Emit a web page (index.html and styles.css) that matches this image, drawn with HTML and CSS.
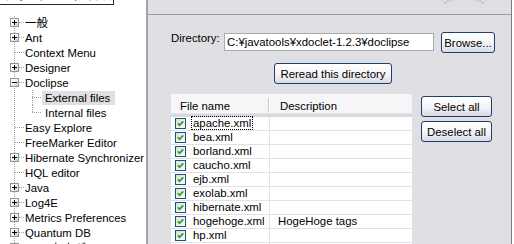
FILE: index.html
```html
<!DOCTYPE html>
<html lang="ja">
<head>
  <meta charset="UTF-8">
  <title>Preferences - Doclipse External files</title>
  <link rel="stylesheet" href="styles.css">
</head>
<body>
  <div class="window">
    <!-- preference tree -->
    <aside class="nav">
      <div class="filter">フィルター・テキストを入力</div>
      <ul class="tree">
        <li class="node"><svg class="tg" width="9" height="9"><use href="#plus"/></svg><span class="dash"></span><span class="label">一般</span></li>
        <li class="node"><svg class="tg" width="9" height="9"><use href="#plus"/></svg><span class="dash"></span><span class="label">Ant</span></li>
        <li class="node leaf"><span class="dash"></span><span class="label">Context Menu</span></li>
        <li class="node"><svg class="tg" width="9" height="9"><use href="#plus"/></svg><span class="dash"></span><span class="label">Designer</span></li>
        <li class="node"><svg class="tg" width="9" height="9"><use href="#minus"/></svg><span class="dash"></span><span class="label">Doclipse</span></li>
        <li class="node sub"><span class="elbow tee"></span><span class="label sel">External files</span></li>
        <li class="node sub"><span class="elbow"></span><span class="label">Internal files</span></li>
        <li class="node leaf"><span class="dash"></span><span class="label">Easy Explore</span></li>
        <li class="node leaf"><span class="dash"></span><span class="label">FreeMarker Editor</span></li>
        <li class="node"><svg class="tg" width="9" height="9"><use href="#plus"/></svg><span class="dash"></span><span class="label">Hibernate Synchronizer</span></li>
        <li class="node leaf"><span class="dash"></span><span class="label">HQL editor</span></li>
        <li class="node"><svg class="tg" width="9" height="9"><use href="#plus"/></svg><span class="dash"></span><span class="label">Java</span></li>
        <li class="node"><svg class="tg" width="9" height="9"><use href="#plus"/></svg><span class="dash"></span><span class="label">Log4E</span></li>
        <li class="node"><svg class="tg" width="9" height="9"><use href="#plus"/></svg><span class="dash"></span><span class="label">Metrics Preferences</span></li>
        <li class="node"><svg class="tg" width="9" height="9"><use href="#plus"/></svg><span class="dash"></span><span class="label">Quantum DB</span></li>
        <li class="node"><svg class="tg" width="9" height="9"><use href="#plus"/></svg><span class="dash"></span><span class="label">Web および XML</span></li>
      </ul>
    </aside>

    <!-- preference page -->
    <main class="page">
      <div class="page-head">
        <svg class="nav-arrow" width="14" height="14" viewBox="0 0 14 14"><path d="M1 7 L7 1 L7 4 L13 4 L13 10 L7 10 L7 13 Z"/></svg>
        <svg class="nav-arrow" width="14" height="14" viewBox="0 0 14 14"><path d="M13 7 L7 1 L7 4 L1 4 L1 10 L7 10 L7 13 Z"/></svg>
      </div>

      <div class="page-body">
        <div class="dir-row">
          <label for="dir">Directory:</label>
          <input type="text" id="dir" value="C:¥javatools¥xdoclet-1.2.3¥doclipse">
          <button class="btn browse">Browse...</button>
        </div>

        <div class="reread-row">
          <button class="btn reread">Reread this directory</button>
        </div>

        <div class="files">
          <div class="list">
            <table id="fileTable">
              <thead>
                <tr>
                  <th class="name">File name</th>
                  <th class="desc">Description</th>
                </tr>
              </thead>
              <tbody>
                <!-- rows are inserted by the script below -->
              </tbody>
            </table>
          </div>
          <div class="side">
            <button class="btn">Select all</button>
            <button class="btn">Deselect all</button>
          </div>
        </div>
      </div>
    </main>
  </div>

  <svg width="0" height="0" style="position:absolute">
    <defs>
      <linearGradient id="tgfill" x1="0" y1="0" x2="1" y2="1">
        <stop offset="0.35" stop-color="#ffffff"/>
        <stop offset="1" stop-color="#c4c4bc"/>
      </linearGradient>
      <linearGradient id="cbfill" x1="0" y1="0" x2="1" y2="1">
        <stop offset="0" stop-color="#dcdcd6"/>
        <stop offset="1" stop-color="#ffffff"/>
      </linearGradient>
      <g id="minus" shape-rendering="crispEdges">
        <rect x="0.5" y="0.5" width="8" height="8" fill="url(#tgfill)" stroke="#8d979b"/>
        <path d="M2 4.5h5" stroke="#000"/>
      </g>
      <g id="plus" shape-rendering="crispEdges">
        <rect x="0.5" y="0.5" width="8" height="8" fill="url(#tgfill)" stroke="#8d979b"/>
        <path d="M2 4.5h5M4.5 2v5" stroke="#000"/>
      </g>
      <g id="check">
        <rect x="0.5" y="0.5" width="10" height="10" fill="url(#cbfill)" stroke="#1c5180" shape-rendering="crispEdges"/>
        <path d="M2.8 5.2 L4.6 7.2 L8.3 3.4" fill="none" stroke="#21a121" stroke-width="1.7"/>
      </g>
    </defs>
  </svg>

  <script>
    // External files known to Doclipse
    const files = [
      { name: "apache.xml", desc: "" },
      { name: "bea.xml", desc: "" },
      { name: "borland.xml", desc: "" },
      { name: "caucho.xml", desc: "" },
      { name: "ejb.xml", desc: "" },
      { name: "exolab.xml", desc: "" },
      { name: "hibernate.xml", desc: "" },
      { name: "hogehoge.xml", desc: "HogeHoge tags" },
      { name: "hp.xml", desc: "" },
      { name: "ibm.xml", desc: "" },
    ];

    const tbody = document.querySelector("#fileTable tbody");
    files.forEach((file, i) => {
      const focus = i === 0 ? " focus" : "";
      tbody.innerHTML += `
        <tr>
          <td class="name"><svg class="cb" width="11" height="11"><use href="#check"/></svg><span class="fname${focus}">${file.name}</span></td>
          <td class="desc">${file.desc}</td>
        </tr>
      `;
    });
  </script>
</body>
</html>
```

FILE: styles.css
```css
body {
  margin: 0;
  background: #fff;
  font-family: "Liberation Sans", "Noto Sans CJK JP", sans-serif;
  font-size: 11.4px;
  color: #000;
}

.window {
  display: flex;
  height: 244px;
  overflow: hidden;
}

/* left tree */
.nav {
  width: 146px;
  flex: none;
  background: #fff;
  border-right: 2px solid #a2a2a8;
  overflow: hidden;
}

.filter {
  width: 114px;
  height: 20px;
  margin-top: -15px;
  padding: 4px 0 0 4px;
  box-sizing: border-box;
  border: 1px solid #2a2a2a;
  border-left: none;
  white-space: nowrap;
  overflow: hidden;
  line-height: 13px;
}

.tree {
  list-style: none;
  margin: 10px 0 0;
  padding: 0;
  background: linear-gradient(#a0a0a0 50%, transparent 50%) 14px 1px / 1px 2px repeat-y;
}

.node {
  display: flex;
  align-items: center;
  height: 15px;
  padding-left: 10px;
  white-space: nowrap;
}

.tg {
  flex: none;
  display: block;
}

.dash {
  flex: none;
  width: 5px;
  height: 1px;
  background: linear-gradient(to right, #a0a0a0 50%, transparent 50%) 0 0 / 2px 1px repeat-x;
}

.node.leaf {
  padding-left: 15px;
}

.leaf .dash {
  width: 9px;
}

.label {
  margin-left: 1px;
  line-height: 14px;
}

.node.sub {
  padding-left: 32px;
}

.elbow {
  flex: none;
  align-self: flex-start;
  width: 10px;
  height: 8px;
  background:
    linear-gradient(#a0a0a0 50%, transparent 50%) 0 0 / 1px 2px repeat-y,
    linear-gradient(to right, #a0a0a0 50%, transparent 50%) 0 7px / 2px 1px repeat-x;
}

.elbow.tee {
  height: 15px;
}

.sub .label {
  margin-left: 0;
  padding: 0 5px 0 3px;
}

.label.sel {
  background: #e0dfe3;
}

/* right page */
.page {
  width: 363px;
  flex: none;
  background: #e0dfe3;
  border-right: 1px solid #7c7c8c;
}

.page-head {
  height: 14px;
  border-bottom: 1px solid #9c9ca4;
  display: flex;
  justify-content: flex-end;
  gap: 22px;
  padding-right: 22px;
  overflow: hidden;
}

.nav-arrow {
  margin-top: -9px;
  fill: #ebe8df;
  stroke: #c2beb3;
  stroke-width: 1;
}

.page-body {
  padding: 17px 0 0 23px;
}

.btn {
  height: 21px;
  padding: 0;
  border: 1px solid #1d3f6f;
  border-radius: 3px;
  background: linear-gradient(#ffffff, #f4f4f7 55%, #d9d9e3);
  font: inherit;
  color: #000;
  cursor: pointer;
}

.dir-row {
  display: flex;
  align-items: flex-start;
}

.dir-row label {
  width: 53px;
  line-height: 13px;
  margin-top: 0;
}

.dir-row input {
  width: 210px;
  height: 18px;
  margin-top: 1px;
  box-sizing: border-box;
  border: 1px solid #a5acb2;
  padding: 0 2px;
  font: inherit;
  color: #000;
  background: #fff;
}

.browse {
  width: 54px;
  margin-left: 7px;
}

.reread-row {
  width: 324px;
  display: flex;
  justify-content: center;
  margin-top: 10px;
}

.reread {
  width: 118px;
}

.files {
  display: flex;
  margin-top: 10px;
}

.list {
  width: 241px;
  height: 160px;
  background: #fff;
  overflow: hidden;
}

table {
  width: 241px;
  border-collapse: separate;
  border-spacing: 0;
  table-layout: fixed;
}

th {
  height: 17px;
  padding: 3px 0 0;
  text-align: left;
  font-weight: normal;
  background: #f6f6f8;
  border-bottom: 3px solid #d8d8e0;
  box-shadow: inset 0 -1px 0 #e6e6ec;
}

th.name {
  width: 99px;
  padding-left: 9px;
  box-sizing: border-box;
  background: linear-gradient(to right, #c9c9d0 50%, #fff 50%) right 0 top 4px / 2px 14px no-repeat, #f6f6f8;
}

th.desc {
  padding-left: 10px;
}

td {
  height: 13px;
  padding: 0;
  border-bottom: 1px solid #e2e1e6;
  white-space: nowrap;
  line-height: 13px;
}

td.name {
  padding-left: 4px;
  border-right: 1px solid #e2e1e6;
}

td.desc {
  padding-left: 8px;
}

.cb {
  vertical-align: -2px;
}

.fname {
  margin-left: 5px;
  padding: 0 1px;
  border: 1px solid transparent;
  line-height: 11px;
}

.fname.focus {
  border: 1px dotted #000;
}

.side {
  display: flex;
  flex-direction: column;
  gap: 4px;
  margin: 2px 0 0 9px;
}

.side .btn {
  width: 71px;
}
```
